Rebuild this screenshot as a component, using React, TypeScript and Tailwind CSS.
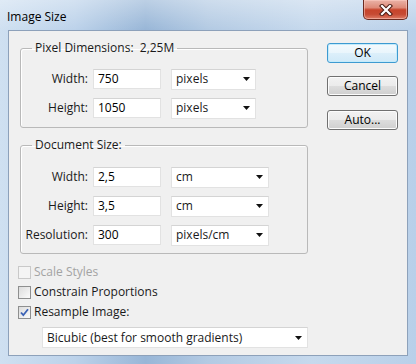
import React from 'react'

const FONT = "font-['Open_Sans','Noto_Sans',sans-serif]"

function Arrow() {
  return (
    <svg width="7" height="4" viewBox="0 0 7 4" className="shrink-0">
      <path d="M0 0h7L3.5 4z" fill="#111" />
    </svg>
  )
}

function Select({ value, w }: { value: string; w: string }) {
  return (
    <div className={`${w} h-[21px] bg-white border border-[#e2e2e2] border-t-[#d4d4d4] flex items-center justify-between pl-[4px] pr-[5px] text-[12px] text-[#1a1a1a]`}>
      <span>{value}</span>
      <Arrow />
    </div>
  )
}

function Field({ label, value, unit, selW }: { label: string; value: string; unit: string; selW: string }) {
  return (
    <div className="flex items-center h-[20px]">
      <span className="w-[67px] text-right text-[12px] text-[#1a1a1a]">{label}</span>
      <div className="ml-[5px] w-[68px] h-[20px] bg-white border border-[#e2e2e2] border-t-[#d4d4d4] flex items-center pl-[4px] text-[12px] text-black">
        {value}
      </div>
      <div className="ml-[10px]">
        <Select value={unit} w={selW} />
      </div>
    </div>
  )
}

function Check({ label, checked, disabled }: { label: string; checked?: boolean; disabled?: boolean }) {
  return (
    <div className="flex items-center h-[20px]">
      <div className={`w-[13px] h-[13px] border flex items-center justify-center ${disabled ? 'border-[#c9c9c9] bg-[#f4f4f4]' : 'border-[#8e8f8f] bg-[linear-gradient(135deg,#dcdcdc,#fbfbfb)]'}`}>
        {checked && (
          <svg width="9" height="9" viewBox="0 0 9 9">
            <path d="M1 4.5l2.3 2.7L8 1.2" fill="none" stroke="#3b62b5" strokeWidth="1.8" />
          </svg>
        )}
      </div>
      <span className={`ml-[3px] text-[12px] ${disabled ? 'text-[#a3a3a3]' : 'text-[#1a1a1a]'}`}>{label}</span>
    </div>
  )
}

function Btn({ label, primary }: { label: string; primary?: boolean }) {
  return (
    <button
      className={`w-[71px] h-[20px] rounded-[3px] border text-[12px] text-black flex items-center justify-center ${
        primary
          ? 'border-[#3d9ad1] bg-[linear-gradient(180deg,#f4fafd_0%,#e9f5fc_50%,#dceffa_51%,#d0e9f8_100%)] shadow-[inset_0_0_0_1px_#c4ebfb]'
          : 'border-[#707070] bg-[linear-gradient(180deg,#f2f2f2_0%,#ebebeb_50%,#dddddd_51%,#cfcfcf_100%)] shadow-[inset_0_0_0_1px_#fcfcfc]'
      }`}
    >
      {label}
    </button>
  )
}

export default function App() {
  return (
    <div className={`w-[416px] h-[364px] flex flex-col ${FONT} bg-[linear-gradient(90deg,#cfe0f1_0%,#bcd2ea_18%,#98b6d7_35%,#b3cae3_50%,#c6d9ed_75%,#b9d0e9_100%)]`}>
      {/* title bar */}
      <div className="h-[30px] flex items-start justify-between pl-[7px] pr-[8px] bg-[linear-gradient(180deg,rgba(255,255,255,0.35),rgba(255,255,255,0))]">
        <span className="mt-[8px] text-[12px] text-black">Image Size</span>
        <div className="w-[45px] h-[20px] rounded-b-[5px] border border-t-0 border-[#6b2a20] bg-[linear-gradient(180deg,#eab3a7_0%,#de8b79_40%,#c7442b_52%,#c64a33_75%,#de7c66_100%)] flex items-center justify-center shadow-[inset_0_0_0_1px_rgba(255,210,200,0.5)]">
          <svg width="14" height="12" viewBox="0 0 14 12">
            <path d="M3 2l8 8M11 2l-8 8" stroke="#4a1c14" strokeWidth="4.2" strokeLinecap="square" />
            <path d="M3 2l8 8M11 2l-8 8" stroke="#fff" strokeWidth="2.2" strokeLinecap="square" />
          </svg>
        </div>
      </div>

      {/* client area */}
      <div className="mx-[8px] mb-[8px] flex-1 border border-[#8da1ba] bg-[#f0f0f0] flex">
        <div className="ml-[9px] w-[292px] flex flex-col">
          <fieldset className="mt-[9px] ml-[2px] w-[288px] border border-[#b9b9b9] rounded-[3px] pt-[13px] pb-[9px] shadow-[inset_1px_1px_0_#fff]">
            <legend className="ml-[11px] px-[3px] text-[12px] leading-[16px] text-[#1a1a1a]">
              Pixel Dimensions:&nbsp; 2,25M
            </legend>
            <div className="flex flex-col gap-[9px]">
              <Field label="Width:" value="750" unit="pixels" selW="w-[85px]" />
              <Field label="Height:" value="1050" unit="pixels" selW="w-[85px]" />
            </div>
          </fieldset>

          <fieldset className="mt-[9px] ml-[2px] w-[288px] border border-[#b9b9b9] rounded-[3px] pt-[14px] pb-[8px] shadow-[inset_1px_1px_0_#fff]">
            <legend className="ml-[11px] px-[3px] text-[12px] leading-[16px] text-[#1a1a1a]">Document Size:</legend>
            <div className="flex flex-col gap-[9px]">
              <Field label="Width:" value="2,5" unit="cm" selW="w-[98px]" />
              <Field label="Height:" value="3,5" unit="cm" selW="w-[98px]" />
              <Field label="Resolution:" value="300" unit="pixels/cm" selW="w-[98px]" />
            </div>
          </fieldset>

          <div className="mt-[8px] flex flex-col">
            <Check label="Scale Styles" disabled />
            <Check label="Constrain Proportions" />
            <Check label="Resample Image:" checked />
          </div>

          <div className="mt-[5px] ml-[24px]">
            <Select value="Bicubic (best for smooth gradients)" w="w-[266px]" />
          </div>
        </div>

        <div className="ml-[17px] mt-[12px] flex flex-col">
          <Btn label="OK" primary />
          <div className="mt-[13px]">
            <Btn label="Cancel" />
          </div>
          <div className="mt-[14px]">
            <Btn label="Auto..." />
          </div>
        </div>
      </div>
    </div>
  )
}
